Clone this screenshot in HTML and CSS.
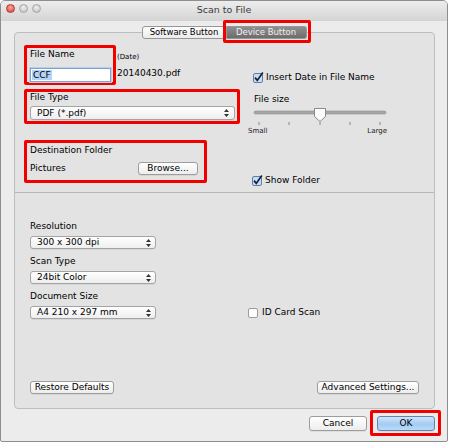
FILE: index.html
```html
<!DOCTYPE html>
<html lang="en">
<head>
<meta charset="UTF-8">
<meta name="viewport" content="width=device-width, initial-scale=1.0">
<title>Scan to File</title>
<link rel="stylesheet" href="styles.css">
</head>
<body>

<div class="window">
  <div class="titlebar">
    <div class="lights">
      <span class="light close"></span>
      <span class="light"></span>
      <span class="light"></span>
    </div>
    <div class="title">Scan to File</div>
    <div></div>
  </div>

  <div class="tabs">
    <span class="tab tab-software">Software Button</span>
    <span class="tab tab-device">Device Button<span class="mark tab-mark"></span></span>
  </div>

  <div class="panel">
    <div class="top">
      <div class="left-col">
        <div class="name-row">
          <div class="mark name-box">
            <div class="label">File Name</div>
            <div class="text-field"><span class="sel">CCF</span></div>
          </div>
          <div class="date-info">
            <div class="date-hint">(Date)</div>
            <div class="date-value">20140430.pdf</div>
          </div>
        </div>

        <div class="mark type-box">
          <div class="label">File Type</div>
          <div class="popup type-popup">
            <span>PDF (*.pdf)</span>
            <svg class="arrows" width="5" height="8" viewBox="0 0 5 8"><path d="M0 3 L2.5 0 L5 3z M0 5 L2.5 8 L5 5z" fill="#333"/></svg>
          </div>
        </div>

        <div class="mark dest-box">
          <div class="label">Destination Folder</div>
          <div class="dest-row">
            <span>Pictures</span>
            <span class="btn browse">Browse...</span>
          </div>
        </div>
      </div>

      <div class="right-col">
        <div class="check insert-date">
          <svg class="cb" width="11" height="11" viewBox="0 0 11 11"><rect x="0.5" y="1.5" width="9" height="9" rx="1.5" fill="#c8dcf2" stroke="#5f7fa6"/><path d="M2 5.6 L4.3 8.4 L9.8 0.6" fill="none" stroke="#14213d" stroke-width="1.7"/></svg>
          <span>Insert Date in File Name</span>
        </div>
        <div class="label size-label">File size</div>
        <div class="slider-wrap">
          <svg class="slider" width="144" height="20" viewBox="0 0 144 20">
            <rect x="6" y="5" width="132" height="3" rx="1.5" fill="#a7a7a7" stroke="#8d8d8d" stroke-width=".6"/>
            <g stroke="#8a8a8a" stroke-width="1">
              <line x1="11" y1="16" x2="11" y2="19"/>
              <line x1="41" y1="16" x2="41" y2="19"/>
              <line x1="72" y1="16" x2="72" y2="19"/>
              <line x1="102" y1="16" x2="102" y2="19"/>
              <line x1="132" y1="16" x2="132" y2="19"/>
            </g>
            <path d="M66.5 2.5 h11 v8 l-5.5 5 l-5.5 -5 z" fill="#fbfbfb" stroke="#8a8a8a"/>
          </svg>
          <div class="scale"><span>Small</span><span>Large</span></div>
        </div>
        <div class="check show-folder">
          <svg class="cb" width="11" height="11" viewBox="0 0 11 11"><rect x="0.5" y="1.5" width="9" height="9" rx="1.5" fill="#c8dcf2" stroke="#5f7fa6"/><path d="M2 5.6 L4.3 8.4 L9.8 0.6" fill="none" stroke="#14213d" stroke-width="1.7"/></svg>
          <span>Show Folder</span>
        </div>
      </div>
    </div>

    <div class="separator"></div>

    <div class="settings">
      <div class="field-label">Resolution</div>
      <div class="popup short">
        <span>300 x 300 dpi</span>
        <svg class="arrows" width="5" height="8" viewBox="0 0 5 8"><path d="M0 3 L2.5 0 L5 3z M0 5 L2.5 8 L5 5z" fill="#333"/></svg>
      </div>
      <div class="field-label">Scan Type</div>
      <div class="popup short">
        <span>24bit Color</span>
        <svg class="arrows" width="5" height="8" viewBox="0 0 5 8"><path d="M0 3 L2.5 0 L5 3z M0 5 L2.5 8 L5 5z" fill="#333"/></svg>
      </div>
      <div class="field-label">Document Size</div>
      <div class="size-row">
        <div class="popup short">
          <span>A4 210 x 297 mm</span>
          <svg class="arrows" width="5" height="8" viewBox="0 0 5 8"><path d="M0 3 L2.5 0 L5 3z M0 5 L2.5 8 L5 5z" fill="#333"/></svg>
        </div>
        <div class="check id-card">
          <svg class="cb" width="11" height="11" viewBox="0 0 11 11"><rect x="0.5" y="1.5" width="9" height="9" rx="1.5" fill="#fdfdfd" stroke="#9b9b9b"/></svg>
          <span>ID Card Scan</span>
        </div>
      </div>

      <div class="actions">
        <span class="btn restore">Restore Defaults</span>
        <span class="btn advanced">Advanced Settings...</span>
      </div>
    </div>
  </div>

  <div class="footer">
    <span class="btn dialog-btn">Cancel</span>
    <span class="btn dialog-btn ok">OK<span class="mark ok-mark"></span></span>
  </div>
</div>

</body>
</html>
```

FILE: styles.css
```css
* {
  box-sizing: border-box;
}

body {
  margin: 0;
  background: #fff;
  font-family: "DejaVu Sans", sans-serif;
  font-size: 9px;
  line-height: 11px;
  color: #000;
}

.window {
  width: 448px;
  height: 442px;
  border: 1px solid #8e8e8e;
  border-radius: 5px 5px 2px 2px;
  background: #ececec;
  overflow: hidden;
}

/* title bar */
.titlebar {
  height: 20px;
  display: grid;
  grid-template-columns: 60px 1fr 60px;
  background: linear-gradient(#ededed, #d4d4d4);
}

.lights {
  display: flex;
  gap: 4px;
  padding: 3px 0 0 5px;
}

.light {
  width: 9px;
  height: 9px;
  border-radius: 50%;
  border: 1px solid #a5a5a5;
  background: radial-gradient(circle at 50% 35%, #f0f0f0, #bcbcbc);
}

.light.close {
  border-color: #b03a30;
  background: radial-gradient(circle at 50% 35%, #f9aaa0, #d9392f);
}

.title {
  text-align: center;
  padding-top: 3px;
  font-size: 9.5px;
  line-height: 12px;
  color: #3a3a3a;
}

/* segmented tabs */
.tabs {
  display: flex;
  justify-content: center;
  margin-top: 5px;
  position: relative;
  z-index: 1;
}

.tab {
  height: 13px;
  line-height: 11px;
  font-size: 8.5px;
  text-align: center;
  border: 1px solid #979797;
}

.tab-software {
  width: 85px;
  border-radius: 3px 0 0 3px;
  background: linear-gradient(#ffffff, #ebebeb);
  color: #000;
}

.tab-device {
  width: 80px;
  border-left: 0;
  border-radius: 0 3px 3px 0;
  background: linear-gradient(#8f8f8f, #6c6c6c);
  color: #f0f0f0;
  position: relative;
}

.mark {
  border: 3px solid #f20000;
  border-radius: 2px;
}

.tab-mark {
  position: absolute;
  top: -7px;
  left: -4px;
  right: -5px;
  bottom: -5px;
}

/* main group box */
.panel {
  margin: -7px 12px 0 13px;
  padding: 12px 9px 14px;
  border: 1px solid #bdbdbd;
  border-radius: 4px;
  background: #e3e3e3;
}

.top {
  display: grid;
  grid-template-columns: 228px 1fr;
}

.name-row {
  display: flex;
}

.name-box {
  width: 92px;
  padding: 1px 3px 0;
}

.text-field {
  margin-top: 8px;
  width: 81px;
  height: 14px;
  padding: 0 0 0 1px;
  background: #fff;
  border: 1px solid #7fa3cf;
  box-shadow: 0 0 0 1px #b6cfec;
  line-height: 12px;
}

.sel {
  background: #b4d3f7;
  padding: 0 1px;
}

.date-info {
  margin-left: 1px;
  padding-top: 7px;
}

.date-hint {
  font-size: 7px;
  line-height: 10px;
}

.date-value {
  margin-top: 6px;
}

.type-box {
  margin-top: 4px;
  width: 216px;
  padding: 0 3px 1px;
}

.popup {
  display: flex;
  align-items: center;
  justify-content: space-between;
  height: 13px;
  padding: 0 4px 0 6px;
  border: 1px solid #a4a4a4;
  border-radius: 3px;
  background: linear-gradient(#ffffff, #eeeeee);
  box-shadow: 0 1px 0 rgba(0, 0, 0, 0.06);
}

.type-popup {
  margin-top: 3px;
  height: 14px;
  width: 205px;
  padding-right: 5px;
}

.arrows {
  display: block;
}

.dest-box {
  margin-top: 16px;
  width: 183px;
  padding: 2px 6px 5px 3px;
}

.dest-row {
  display: flex;
  justify-content: space-between;
  align-items: center;
  margin-top: 6px;
}

.btn {
  display: inline-block;
  height: 13px;
  line-height: 11px;
  text-align: center;
  border: 1px solid #9d9d9d;
  border-radius: 3px;
  background: linear-gradient(#ffffff, #ededed);
  box-shadow: 0 1px 0 rgba(0, 0, 0, 0.06);
}

.browse {
  width: 60px;
}

/* right column */
.check {
  display: flex;
  align-items: center;
  gap: 2px;
  height: 11px;
}

.cb {
  display: block;
  flex: none;
}

.insert-date {
  margin-top: 27px;
  margin-left: 1px;
}

.size-label {
  margin-top: 11px;
  margin-left: 2px;
}

.slider-wrap {
  width: 144px;
  margin-left: -4px;
}

.slider {
  display: block;
  margin-top: 1px;
}

.scale {
  display: flex;
  justify-content: space-between;
  padding-right: 5px;
  font-size: 7px;
  line-height: 10px;
  color: #222;
}

.show-folder {
  margin-top: 39px;
}

.separator {
  margin: 6px -9px 0;
  border-top: 1px solid #b7b7b7;
}

/* scan settings */
.settings {
  padding: 28px 6px 0;
}

.field-label {
  margin-bottom: 4px;
}

.popup.short {
  width: 126px;
  margin-bottom: 7px;
}

.size-row {
  display: flex;
  align-items: center;
}

.size-row .popup.short {
  margin-bottom: 0;
}

.id-card {
  margin-left: 92px;
  gap: 3px;
}

.actions {
  display: flex;
  justify-content: space-between;
  margin-top: 62px;
}

.restore {
  width: 84px;
}

.advanced {
  width: 102px;
}

/* dialog buttons */
.footer {
  display: flex;
  justify-content: flex-end;
  gap: 10px;
  margin-top: 7px;
  padding-right: 12px;
}

.dialog-btn {
  width: 58px;
  height: 15px;
  line-height: 13px;
}

.ok {
  position: relative;
  border-color: #6383b0;
  background: linear-gradient(#cfe5fb, #a3ccf3 55%, #b9dbf8);
}

.ok-mark {
  position: absolute;
  top: -7px;
  left: -8px;
  right: -7px;
  bottom: -6px;
}
```
